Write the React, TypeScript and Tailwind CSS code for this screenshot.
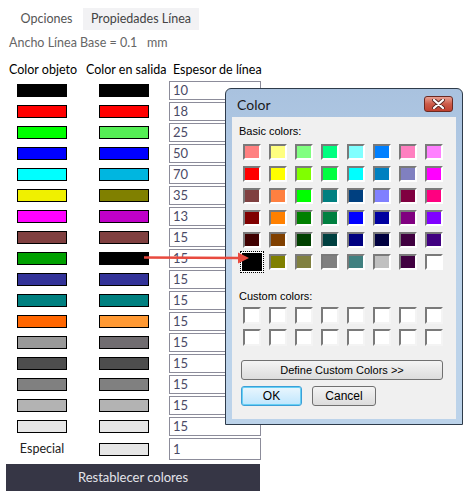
import React from "react";

const rows: [string, string, string][] = [
  ["#000000", "#000000", "10"],
  ["#ff0000", "#ff0000", "18"],
  ["#00ff00", "#55ee55", "25"],
  ["#0000ff", "#0000ff", "50"],
  ["#00ffff", "#00b6e0", "70"],
  ["#f0f000", "#808000", "35"],
  ["#ff00ff", "#c000c8", "13"],
  ["#804040", "#804040", "15"],
  ["#00a000", "#000000", "15"],
  ["#333399", "#333399", "15"],
  ["#008080", "#008080", "15"],
  ["#ff6600", "#ff9933", "15"],
  ["#999999", "#706c70", "15"],
  ["#4d4d4d", "#4d4d4d", "15"],
  ["#808080", "#808080", "15"],
  ["#b3b3b3", "#b3b3b3", "15"],
  ["#e6e6e6", "#e6e6e6", "15"],
];

const basic = [
  "#ff8080", "#ffff80", "#80ff80", "#00ff80", "#80ffff", "#0080ff", "#ff80c0", "#ff80ff",
  "#ff0000", "#ffff00", "#80ff00", "#00ff40", "#00ffff", "#0080c0", "#8080c0", "#ff00ff",
  "#804040", "#ff8040", "#00ff00", "#008080", "#004080", "#8080ff", "#800040", "#ff0080",
  "#800000", "#ff8000", "#008000", "#008040", "#0000ff", "#0000a0", "#800080", "#8000ff",
  "#400000", "#804000", "#004000", "#004040", "#000080", "#000040", "#400040", "#400080",
  "#000000", "#808000", "#808040", "#808080", "#408080", "#c0c0c0", "#400040", "#ffffff",
];

function Swatch({ color }: { color: string }) {
  return <div className="w-[50px] h-[13px] border border-black" style={{ background: color }} />;
}

function ColorDialog() {
  return (
    <div className="absolute left-[225px] top-[88px] w-[238px] h-[337px] rounded-t-[6px] border border-[#2e3b4a] bg-gradient-to-b from-[#a9c2df] via-[#bcd3ea] to-[#bcd3ea] flex flex-col font-['Liberation_Sans',sans-serif] text-[11px] text-black">
      <div className="h-[28px] flex items-center justify-between pl-[11px] pr-[9px]">
        <span className="text-[14px] font-['Lato',sans-serif] text-[#1a1a1a] pt-[2px]">Color</span>
        <div className="w-[29px] h-[16px] mt-[2px] rounded-[3px] border border-[#6b2a22] bg-gradient-to-b from-[#e8a093] via-[#cc5b48] to-[#c0402f] flex items-center justify-center">
          <svg width="13" height="10" viewBox="0 0 13 10">
            <path d="M2 1 L11 9 M11 1 L2 9" stroke="#5a2a24" strokeWidth="4" strokeLinecap="round" />
            <path d="M2 1 L11 9 M11 1 L2 9" stroke="#ffffff" strokeWidth="2.2" strokeLinecap="round" />
          </svg>
        </div>
      </div>
      <div className="mx-[6px] mb-[5px] flex-1 bg-[#f0f0f0] flex flex-col">
        <div className="pl-[7px] pt-[8px] h-[27px] leading-[13px]">Basic colors:</div>
        <div className="pl-[11px] grid grid-cols-[repeat(8,18px)] gap-x-[8px] gap-y-[6px]">
          {basic.map((c, i) =>
            i === 40 ? (
              <div key={i} className="relative w-[18px] h-[16px]">
                <div className="absolute -inset-[3px] border border-dotted border-black" />
                <div className="absolute -inset-[1px] border-2 border-black bg-black outline outline-1 outline-white" />
              </div>
            ) : (
              <div
                key={i}
                className="w-[18px] h-[16px] border-2 border-t-[#7a7a7a] border-l-[#7a7a7a] border-b-white border-r-white"
                style={{ background: c }}
              />
            )
          )}
        </div>
        <div className="pl-[7px] mt-[20px] h-[17px] leading-[13px]">Custom colors:</div>
        <div className="pl-[11px] grid grid-cols-[repeat(8,18px)] gap-x-[8px] gap-y-[5px]">
          {Array.from({ length: 16 }).map((_, i) => (
            <div key={i} className="w-[18px] h-[17px] bg-white border-2 border-t-[#7a7a7a] border-l-[#7a7a7a] border-b-[#f4f4f4] border-r-[#f4f4f4]" />
          ))}
        </div>
        <div className="ml-[9px] mt-[14px] w-[202px] h-[20px] rounded-[3px] border border-[#707070] bg-gradient-to-b from-[#f4f4f4] to-[#dcdcdc] flex items-center justify-center">
          Define Custom Colors &gt;&gt;
        </div>
        <div className="ml-[9px] mt-[6px] flex gap-[10px]">
          <div className="w-[61px] h-[20px] rounded-[3px] border border-[#3c9fd8] bg-gradient-to-b from-[#eaf6fd] to-[#bee6fd] shadow-[inset_0_0_0_1px_#66d0f4] flex items-center justify-center text-[12px]">
            OK
          </div>
          <div className="w-[64px] h-[20px] rounded-[3px] border border-[#707070] bg-gradient-to-b from-[#f4f4f4] to-[#dcdcdc] flex items-center justify-center text-[12px]">
            Cancel
          </div>
        </div>
      </div>
    </div>
  );
}

export default function App() {
  return (
    <div className="relative w-[465px] h-[497px] bg-white overflow-hidden font-['Lato',sans-serif] text-[12.5px]">
      <div className="flex pt-[8px] pl-[10px] h-[30px]">
        <div className="w-[73px] h-[22px] flex items-center justify-center text-[#555]">Opciones</div>
        <div className="w-[116px] h-[22px] bg-[#f2f2f4] flex items-center justify-center text-[#444]">
          Propiedades Línea
        </div>
      </div>
      <div className="pl-[9px] mt-[4px] h-[18px] leading-[18px] text-[#666]">Ancho Línea Base = 0.1&nbsp;&nbsp; mm</div>
      <div className="flex mt-[8px] h-[19px] leading-[19px] text-black">
        <div className="pl-[9px] w-[86px]">Color objeto</div>
        <div className="w-[87px]">Color en salida</div>
        <div>Espesor de línea</div>
      </div>
      <div className="mt-[2px] flex flex-col gap-[2px]">
        {rows.map(([a, b, v], i) => (
          <div key={i} className="flex items-center h-[19px]">
            <div className="w-[99px] pl-[17px]"><Swatch color={a} /></div>
            <div className="w-[70px]"><Swatch color={b} /></div>
            <div className="w-[92px] h-[19px] border border-[#8c8c9a] pl-[3px] text-[13px] leading-[17px] text-[#4a4a66]">{v}</div>
          </div>
        ))}
        <div className="flex items-center h-[22px]">
          <div className="w-[99px] pl-[17px]"><div className="w-[50px] text-center text-[#222]">Especial</div></div>
          <div className="w-[70px]"><Swatch color="#e6e6e6" /></div>
          <div className="w-[92px] h-[22px] border border-[#8c8c9a] pl-[3px] text-[13px] leading-[20px] text-[#4a4a66]">1</div>
        </div>
      </div>
      <div className="ml-[6px] mt-[4px] w-[254px] h-[27px] bg-[#363645] flex items-center justify-center text-[#e4e4ea] text-[13px]">
        Restablecer colores
      </div>
      <ColorDialog />
      <svg className="absolute left-0 top-0" width="465" height="497">
        <line x1="144" y1="257.5" x2="240" y2="258" stroke="#e84a3f" strokeWidth="2.5" />
        <path d="M238 252.5 L249 258 L238 263.5 Z" fill="#e84a3f" />
      </svg>
    </div>
  );
}
